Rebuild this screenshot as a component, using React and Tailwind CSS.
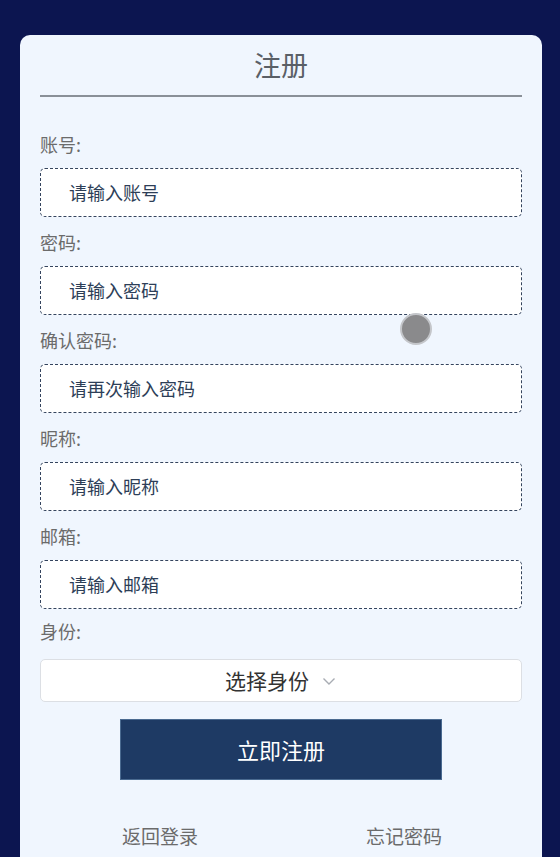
const fields = [
  { label: '账号:', placeholder: '请输入账号' },
  { label: '密码:', placeholder: '请输入密码' },
  { label: '确认密码:', placeholder: '请再次输入密码' },
  { label: '昵称:', placeholder: '请输入昵称' },
  { label: '邮箱:', placeholder: '请输入邮箱' },
];

const font = { fontFamily: '"Noto Sans CJK SC", "Noto Sans", sans-serif' };

export default function App() {
  return (
    <div className="relative h-[857px] overflow-hidden bg-[#0c1550] pt-[35px] pl-[20px]" style={font}>
      <div className="w-[522px] h-[840px] rounded-[10px] bg-[#f0f6fe] px-[20px]">
        {/* Header */}
        <div className="h-[60px] flex items-center justify-center text-[27px] text-[#5a5f66]">
          注册
        </div>
        <div className="h-[2px] bg-[#8a9098]" />

        <div className="pt-[22px]">
          {fields.map((f) => (
            <div key={f.label}>
              <div className="mt-[14px] mb-[13px] h-[22px] leading-[22px] text-[18px] text-[#6b6b6b]">
                {f.label}
              </div>
              <div className="h-[49px] rounded-[5px] border border-dashed border-[#34445e] bg-white pl-[28px] flex items-center text-[18px] text-[#2d3e57]">
                {f.placeholder}
              </div>
            </div>
          ))}

          <div className="mt-[11px] mb-[17px] h-[22px] leading-[22px] text-[18px] text-[#6b6b6b]">身份:</div>
          <div className="h-[43px] rounded-[5px] border border-[#dcdfe4] bg-white flex items-center justify-center gap-[12px] text-[21px] text-[#333]">
            <span>选择身份</span>
            <svg width="16" height="16" viewBox="0 0 16 16" fill="none" stroke="#a8acb3" strokeWidth="1.4">
              <path d="M2.5 5.5l5.5 5.5 5.5-5.5" />
            </svg>
          </div>

          <div className="flex justify-center mt-[17px]">
            <button className="w-[322px] h-[61px] bg-[#1e3a64] border border-[#4a6a90] text-white text-[22px]" style={font}>
              立即注册
            </button>
          </div>

          <div className="flex justify-between mt-[42px] pl-[82px] pr-[80px] text-[19px] text-[#6b6b6b]">
            <span>返回登录</span>
            <span>忘记密码</span>
          </div>
        </div>
      </div>

      {/* touch indicator */}
      <div className="absolute left-[400px] top-[313px] w-[32px] h-[32px] rounded-full bg-[#8a8a8c] border-[2px] border-[#c4c6ca]" />
    </div>
  );
}
